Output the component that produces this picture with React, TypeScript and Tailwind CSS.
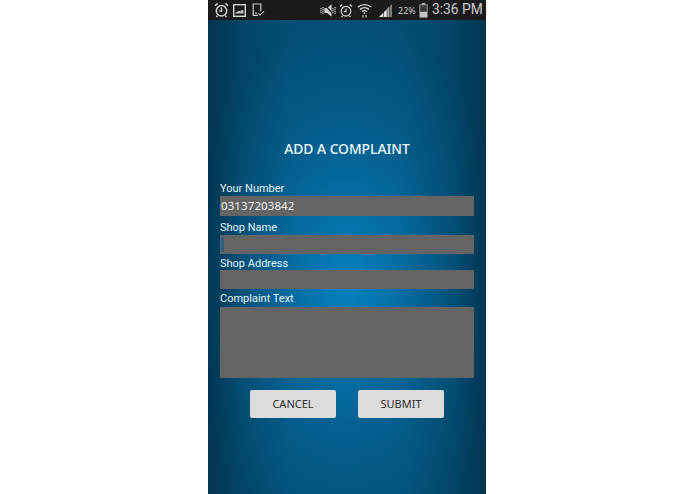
import React from "react";

function StatusIcons() {
  return (
    <div className="h-[20px] bg-[#1b1b1b] flex items-center pl-[6px] text-[#c8c8c8]">
      <svg width="15" height="16" viewBox="0 0 15 16" fill="none" stroke="#d0d0d0" strokeWidth="1.5">
        <circle cx="7.5" cy="8.8" r="5.2" />
        <path d="M7.5 5.6V9H5.2M1 3.8 3.6 1.4M14 3.8 11.4 1.4M3.5 13.6l-1 1.5M11.5 13.6l1 1.5" />
      </svg>
      <svg className="ml-[4px]" width="13" height="13" viewBox="0 0 13 13">
        <rect x="0.7" y="0.7" width="11.6" height="11.6" fill="#1b1b1b" stroke="#d6d6d6" strokeWidth="1.4" />
        <path d="M2.5 9.5V8.4l2.2-.8 1.3-.9 1.5.7 1.2-1.6 1.8.6V9.5z" fill="#c4c4c4" />
      </svg>
      <svg className="ml-[6px]" width="13" height="14" viewBox="0 0 13 14" fill="none" stroke="#c9c9c9" strokeWidth="1.2">
        <path d="M6 12.4H1.2V1h7.6v7" />
        <path d="M6.6 10.4 8 12l4-3.6" />
        <path d="M3 10h2" />
      </svg>
      <svg className="ml-[55px]" width="17" height="13" viewBox="0 0 17 13" fill="none" stroke="#d4d4d4" strokeWidth="1.2">
        <path d="M1 4v5M3 3v7" strokeDasharray="1.2 0.8" />
        <path d="M5 4.5h2.5L11 1.5v10L7.5 8.5H5z" fill="#d4d4d4" />
        <path d="M5 1 15 12.5" stroke="#1b1b1b" strokeWidth="1.3" />
        <path d="M13 4v5M15 3v7" strokeDasharray="1.2 0.8" />
      </svg>
      <svg className="ml-[2px]" width="14" height="15" viewBox="0 0 14 15" fill="none" stroke="#cfcfcf" strokeWidth="1.3">
        <circle cx="7" cy="8.2" r="4.8" />
        <path d="M7 5.4v3.2H4.9M1 3.4 3.2 1.4M13 3.4 10.8 1.4M3.6 12.6l-1 1.4M10.4 12.6l1 1.4" />
      </svg>
      <svg className="ml-[4px]" width="15" height="15" viewBox="0 0 15 15" fill="none" stroke="#d6d6d6" strokeWidth="1.4">
        <path d="M0.8 4C4.7 .8 10.3 .8 14.2 4M3 6.4C5.6 4.2 9.4 4.2 12 6.4M5 8.6C6.3 7.6 8.7 7.6 10 8.6" />
        <circle cx="7.5" cy="10.2" r="0.9" fill="#d6d6d6" stroke="none" />
        <path d="M6 12v2.6M9 12v2.6" strokeWidth="1.1" />
      </svg>
      <svg className="ml-[7px]" width="13" height="14" viewBox="0 0 13 14">
        <path d="M0 14 4.4 9.6V14zM5 9 7.8 6.2V14H5z" fill="#e0e0e0" />
        <path d="M8.4 5.6 10.4 3.6V14H8.4z" fill="#b4b4b4" />
        <path d="M11 3 13 1V14H11z" fill="#7c7c7c" />
      </svg>
      <span className="ml-[6px] w-[20px] text-[9px] leading-none text-[#c8c8c8]">22%</span>
      <svg className="ml-[1px]" width="9" height="15" viewBox="0 0 9 15">
        <rect x="2.8" y="0" width="3.4" height="1.6" fill="#bdbdbd" />
        <rect x="0.5" y="1.5" width="8" height="13" fill="#c4c4c4" />
        <rect x="1.2" y="2.2" width="6.6" height="6.6" fill="#3a3a3a" />
      </svg>
      <span className="ml-[4px] text-[13.8px] leading-none text-[#cccccc] font-['Roboto',sans-serif] whitespace-nowrap">3:36 PM</span>
    </div>
  );
}

function Label({ children, className = "" }: { children: React.ReactNode; className?: string }) {
  return <div className={`text-[11px] leading-[14px] text-[#e8f3f8] font-['Roboto',sans-serif] ${className}`}>{children}</div>;
}

export default function App() {
  return (
    <div className="w-[695px] h-[494px] bg-white overflow-hidden font-['Noto_Sans',sans-serif]">
      <div className="ml-[208px] w-[278px] h-[494px] flex flex-col bg-[linear-gradient(to_right,rgba(2,30,48,0.55)_0%,rgba(2,30,48,0.18)_12%,rgba(2,30,48,0)_30%,rgba(2,30,48,0)_70%,rgba(2,30,48,0.18)_88%,rgba(2,30,48,0.55)_100%),radial-gradient(ellipse_170px_270px_at_50%_58%,#0582c1_0%,#056da3_32%,#045c89_62%,#034e74_100%)]">
        <StatusIcons />
        <div className="flex-1 px-[12px] flex flex-col">
          <div className="mt-[120px] text-center text-[13.8px] leading-[18px] font-medium text-[#f2f8fb]">ADD A COMPLAINT</div>
          <Label className="mt-[24px]">Your Number</Label>
          <div className="h-[20px] bg-[#646464] pl-[1px] text-[11.5px] leading-[20px] tracking-[0.1px] text-[#f0f0f0]">03137203842</div>
          <Label className="mt-[5px]">Shop Name</Label>
          <div className="h-[19px] bg-[#646464] pt-[2px] pl-[1px]">
            <div className="w-[3px] h-[15px] bg-[#2a5f86]" />
          </div>
          <Label className="mt-[3px]">Shop Address</Label>
          <div className="mt-[-1px] h-[19px] bg-[#646464]" />
          <Label className="mt-[3px]">Complaint Text</Label>
          <div className="mt-[1px] h-[71px] bg-[#646464]" />
          <div className="mt-[12px] flex justify-center gap-[22px]">
            <div className="w-[86px] h-[28px] rounded-[2px] bg-[#dcdcdc] flex items-center justify-center text-[11px] text-[#2c2c2c]">CANCEL</div>
            <div className="w-[86px] h-[28px] rounded-[2px] bg-[#dcdcdc] flex items-center justify-center text-[11px] text-[#2c2c2c]">SUBMIT</div>
          </div>
        </div>
      </div>
    </div>
  );
}
